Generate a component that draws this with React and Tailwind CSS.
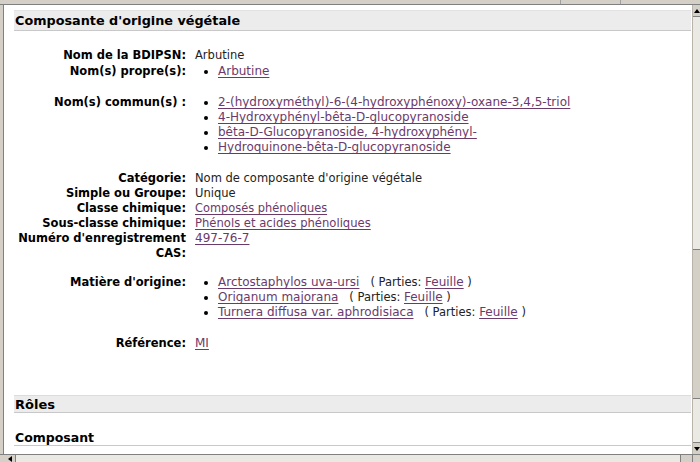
import React from 'react'

const font = { fontFamily: '"DejaVu Sans", Verdana, sans-serif' }

const Row = ({ label, children, className = '' }) => (
  <div className={`grid grid-cols-[170px_1fr] gap-x-[9px] ${className}`}>
    <div className="text-right font-bold text-[11.5px] text-black">{label}</div>
    <div className="text-[#222] text-[11.5px]">{children}</div>
  </div>
)

const A = ({ children, size = 'text-[12px]' }) => <a href="#" className={`text-[#6b3a6b] underline underline-offset-2 ${size}`}>{children}</a>

const Bullets = ({ items }) => (
  <ul className="list-disc pl-[23px] marker:text-black">
    {items.map((it, i) => <li key={i}>{it}</li>)}
  </ul>
)

const App = () => {
  return (
    <div className="w-[700px] h-[462px] bg-[#d4d0c8] flex flex-col overflow-hidden" style={font}>
      {/* top window edge */}
      <div className="h-[4px] flex">
        <div className="w-[560px]" />
        <div className="w-[60px] border-l border-[#a0a0a0]" />
        <div className="w-[30px] border-l border-[#a0a0a0]" />
      </div>
      <div className="h-[1px] bg-[#808080]" />
      <div className="flex-1 flex min-h-0">
        <div className="w-[3px] bg-[#d4d0c8]" />
        <div className="w-[1px] bg-[#808080]" />
        <div className="flex-1 bg-white pt-[5px] pl-[10px] pr-[1px] text-[11px] leading-[15px] min-w-0">
          <div className="h-[21px] bg-[#ececec] border-t border-[#e2e2e2] border-b border-b-[#c8c8c8] flex items-center px-[1px]">
            <h2 className="text-[12.8px] font-bold text-black">Composante d'origine végétale</h2>
          </div>

          <div className="pl-[2px] mt-[17px]">
            <Row label="Nom de la BDIPSN:">Arbutine</Row>
            <Row label="Nom(s) propre(s):" className="mt-[1px]">
              <Bullets items={[<A>Arbutine</A>]} />
            </Row>
            <Row label="Nom(s) commun(s) :" className="mt-[16px]">
              <Bullets
                items={[
                  <A>2-(hydroxyméthyl)-6-(4-hydroxyphénoxy)-oxane-3,4,5-triol</A>,
                  <A>4-Hydroxyphényl-bêta-D-glucopyranoside</A>,
                  <A>bêta-D-Glucopyranoside, 4-hydroxyphényl-</A>,
                  <A>Hydroquinone-bêta-D-glucopyranoside</A>,
                ]}
              />
            </Row>
            <Row label="Catégorie:" className="mt-[16px]">Nom de composante d'origine végétale</Row>
            <Row label="Simple ou Groupe:">Unique</Row>
            <Row label="Classe chimique:"><A size="text-[11.4px]">Composés phénoliques</A></Row>
            <Row label="Sous-classe chimique:"><A size="text-[11.6px]">Phénols et acides phénoliques</A></Row>
            <Row
              label={
                <>
                  <span className="whitespace-nowrap">Numéro d'enregistrement</span>
                  <br />
                  CAS:
                </>
              }
            >
              <A>497-76-7</A>
            </Row>
            <Row label="Matière d'origine:" className="mt-[14px]">
              <Bullets
                items={[
                  <span><A>Arctostaphylos uva-ursi</A>&nbsp;&nbsp;&nbsp;( Parties: <A>Feuille</A> )</span>,
                  <span><A>Origanum majorana</A>&nbsp;&nbsp;&nbsp;( Parties: <A>Feuille</A> )</span>,
                  <span><A>Turnera diffusa var. aphrodisiaca</A>&nbsp;&nbsp;&nbsp;( Parties: <A>Feuille</A> )</span>,
                ]}
              />
            </Row>
            <Row label="Référence:" className="mt-[16px]"><A>MI</A></Row>
          </div>

          <div className="mt-[44px] h-[18px] bg-[#ececec] border-t border-[#dcdcdc] border-b border-b-[#c8c8c8] flex items-center px-[1px]">
            <h3 className="text-[13px] font-bold text-black">Rôles</h3>
          </div>
          <div className="mt-[16px] h-[17px] border-b border-[#c8c8c8] flex items-center px-[1px]">
            <h4 className="text-[12.5px] font-bold text-black">Composant</h4>
          </div>
        </div>
        {/* vertical scrollbar */}
        <div className="w-[8px] flex flex-col bg-[#ebe9e3] border-l border-[#b8b4aa]">
          <div className="h-[12px] bg-[#d4d0c8] border-b border-[#808080] flex items-center justify-center">
            <div className="w-0 h-0 border-l-[3px] border-r-[3px] border-b-[4px] border-l-transparent border-r-transparent border-b-black" />
          </div>
          <div className="h-[150px] mt-[232px] bg-[#d4d0c8] border-y border-[#808080]" />
          <div className="flex-1" />
          <div className="h-[12px] bg-[#d4d0c8] border-t border-[#808080] flex items-center justify-center">
            <div className="w-0 h-0 border-l-[3px] border-r-[3px] border-t-[4px] border-l-transparent border-r-transparent border-t-black" />
          </div>
        </div>
      </div>
      {/* horizontal scrollbar */}
      <div className="h-[8px] flex border-t border-[#808080] bg-[#ebe9e3]">
        <div className="w-[4px] bg-[#d4d0c8]" />
        <div className="w-[12px] bg-[#d4d0c8] border-r border-[#808080] flex items-center justify-center">
          <div className="w-0 h-0 border-t-[3px] border-b-[3px] border-r-[4px] border-t-transparent border-b-transparent border-r-black" />
        </div>
        <div className="flex-1" />
        <div className="w-[12px] bg-[#d4d0c8] border-l border-[#808080]" />
        <div className="w-[8px] bg-[#d4d0c8] border-l border-[#808080]" />
      </div>
    </div>
  )
}

export default App
